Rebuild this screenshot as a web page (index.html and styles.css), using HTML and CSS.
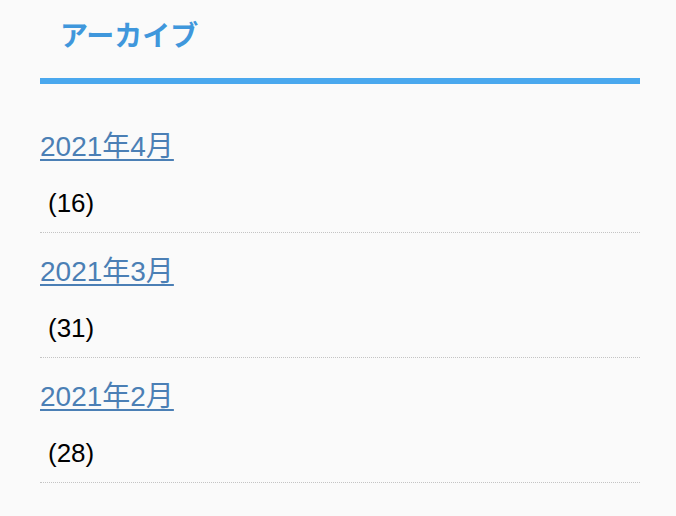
FILE: index.html
```html
<!DOCTYPE html>
<html lang="ja">
<head>
<meta charset="utf-8">
<link rel="stylesheet" href="styles.css">
</head>
<body>
<div class="widget">
  <h2 class="widget-title">アーカイブ</h2>
  <ul class="archive-list">
    <li class="archive-item"><a class="archive-link" href="#">2021年4月</a><span class="archive-count">(16)</span></li>
    <li class="archive-item"><a class="archive-link" href="#">2021年3月</a><span class="archive-count">(31)</span></li>
    <li class="archive-item"><a class="archive-link" href="#">2021年2月</a><span class="archive-count">(28)</span></li>
  </ul>
</div>
</body>
</html>
```
FILE: styles.css
```css
html, body {
  margin: 0;
  padding: 0;
  background: #fafafa;
}
body {
  font-family: "Liberation Sans", "Noto Sans CJK JP", sans-serif;
  color: #000;
}
.widget {
  margin: 0 36px 0 40px;
}
.widget-title {
  margin: 0;
  padding: 0 0 4px 20px;
  line-height: 74px;
  font-size: 28px;
  font-weight: bold;
  color: #3f97dc;
  border-bottom: 6px solid #4aa8ee;
}
.archive-list {
  list-style: none;
  margin: 24px 0 0;
  padding: 0;
}
.archive-item {
  display: flex;
  flex-direction: column;
  align-items: flex-start;
  padding: 21px 0 11px;
  border-bottom: 1px dotted #c4c4c4;
}
.archive-link {
  font-size: 28px;
  line-height: 36px;
  color: #4b7fb5;
  text-decoration: underline;
  text-decoration-thickness: 2px;
  text-underline-offset: 3px;
}
.archive-count {
  margin-top: 20px;
  padding-left: 8px;
  font-size: 26px;
  line-height: 36px;
}
```
